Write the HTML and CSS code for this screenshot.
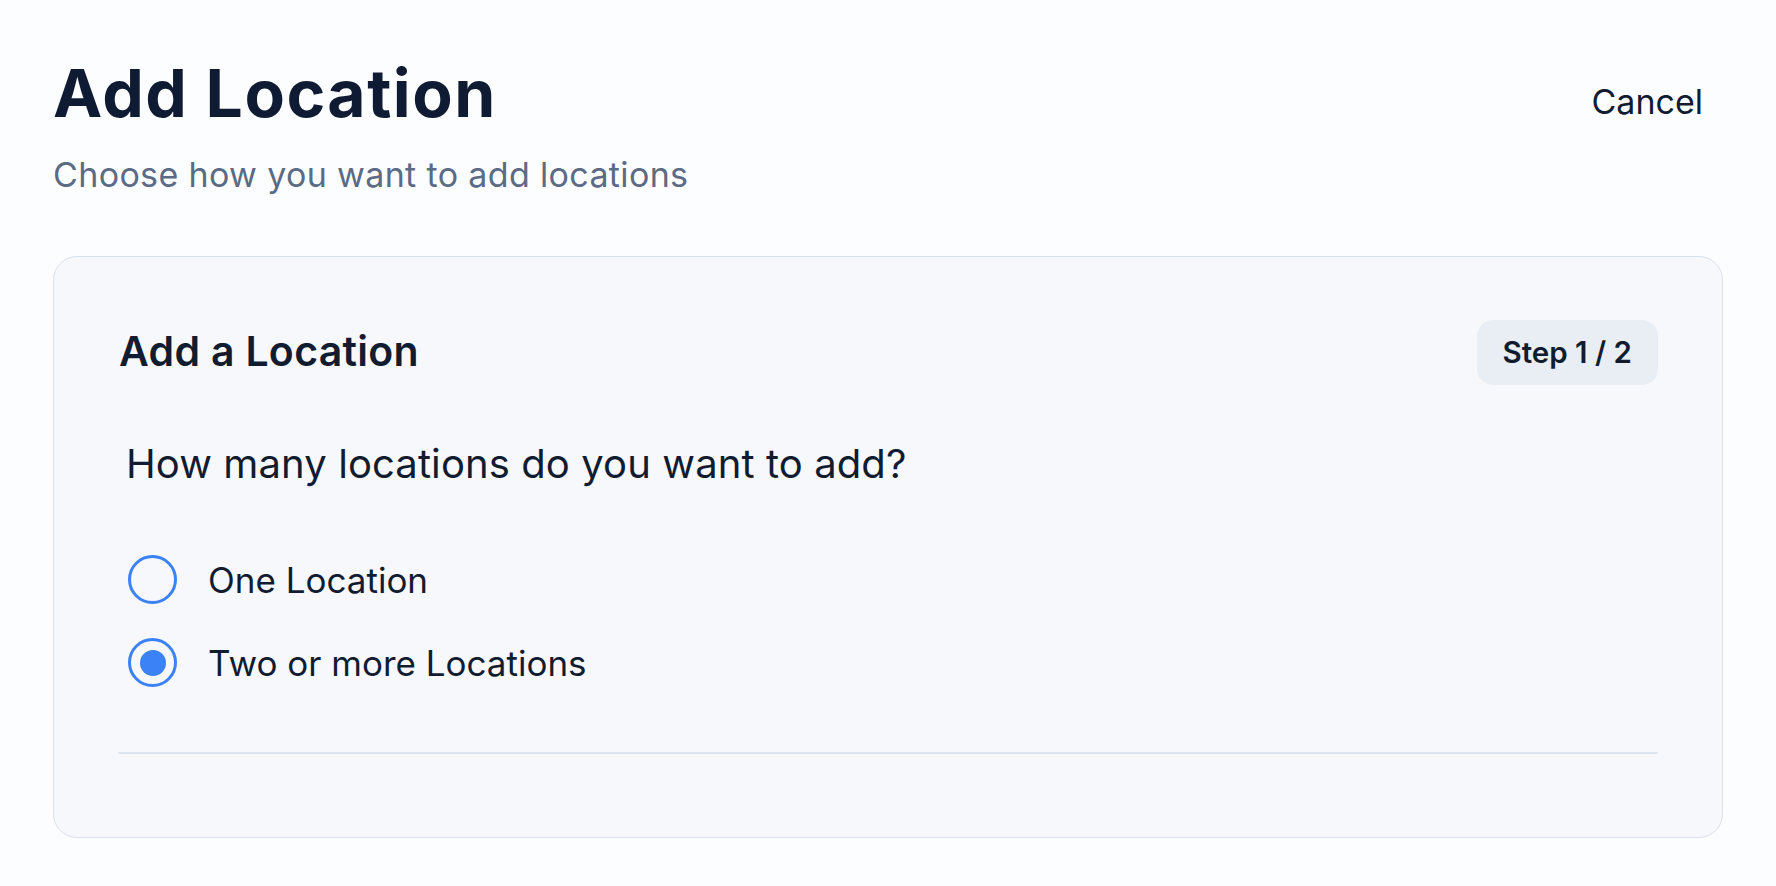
FILE: index.html
```html
<!DOCTYPE html>
<html lang="en">
<head>
    <meta charset="UTF-8">
    <meta name="viewport" content="width=device-width, initial-scale=1.0">
    <title>Add Location</title>
    <link rel="stylesheet" href="styles.css">
</head>
<body>
    <div class="page">
        <header class="pageHeader">
            <div class="titleBlock">
                <h1 class="pageTitle">Add Location</h1>
                <p class="pageSubtitle">Choose how you want to add locations</p>
            </div>
            <button class="cancelButton">Cancel</button>
        </header>

        <section class="card">
            <div class="cardHeader">
                <h2 class="cardTitle">Add a Location</h2>
                <span class="stepBadge">Step 1 / 2</span>
            </div>

            <p class="question">How many locations do you want to add?</p>

            <div class="options">
                <label class="option">
                    <input type="radio" name="count" value="one">
                    <span class="radio"></span>
                    <span class="optionText">One Location</span>
                </label>
                <label class="option">
                    <input type="radio" name="count" value="many" checked>
                    <span class="radio"></span>
                    <span class="optionText">Two or more Locations</span>
                </label>
            </div>

            <hr class="divider">
        </section>
    </div>
</body>
</html>
```

FILE: styles.css
```css
body {
    margin: 0;
    background-color: #fcfdfe;
    font-family: Inter, "Noto Sans", sans-serif;
    color: #111c30;
}

.page {
    padding: 0 53px;
}

.pageHeader {
    display: flex;
    justify-content: space-between;
    align-items: flex-start;
    padding-top: 60px;
}

.pageTitle {
    margin: 0;
    font-size: 66px;
    line-height: 66px;
    font-weight: 700;
    color: #0f1b33;
    letter-spacing: 1.5px;
}

.pageSubtitle {
    margin: 32px 0 0 0;
    font-size: 34px;
    line-height: 34px;
    color: #5b6b85;
    letter-spacing: 0.35px;
}

.cancelButton {
    border: none;
    background: none;
    padding: 0;
    margin: 25px 20px 0 0;
    font-family: inherit;
    font-size: 34px;
    line-height: 34px;
    color: #111c30;
    cursor: pointer;
}

.card {
    margin-top: 64px;
    padding: 63px 64px 83px 64px;
    background-color: #f6f8fb;
    border: 1px solid #d9e1ec;
    border-radius: 24px;
}

.cardHeader {
    display: flex;
    justify-content: space-between;
    align-items: center;
}

.cardTitle {
    margin: 0 0 3px 1px;
    font-size: 41px;
    line-height: 41px;
    font-weight: 600;
    color: #111c30;
    letter-spacing: 0.3px;
}

.stepBadge {
    padding: 18px 26px;
    font-size: 29.5px;
    line-height: 29px;
    font-weight: 600;
    background-color: #e9eef4;
    border-radius: 16px;
}

.question {
    margin: 60px 0 0 8px;
    font-size: 40px;
    line-height: 38px;
    letter-spacing: 0.1px;
}

.options {
    display: flex;
    flex-direction: column;
    gap: 34px;
    margin-top: 72px;
    margin-left: 10px;
}

.option {
    display: flex;
    align-items: center;
    gap: 31px;
    height: 49px;
    cursor: pointer;
}

.option input {
    display: none;
}

.radio {
    box-sizing: border-box;
    width: 49px;
    height: 49px;
    border: 3px solid #3b82f6;
    border-radius: 50%;
    display: flex;
    align-items: center;
    justify-content: center;
}

.option input:checked + .radio::after {
    content: "";
    width: 26px;
    height: 26px;
    border-radius: 50%;
    background-color: #3b82f6;
}

.optionText {
    font-size: 35px;
    line-height: 34px;
}

.divider {
    margin: 65px 0 0 0;
    border: none;
    height: 2px;
    background-color: #dfe5ee;
}
```
